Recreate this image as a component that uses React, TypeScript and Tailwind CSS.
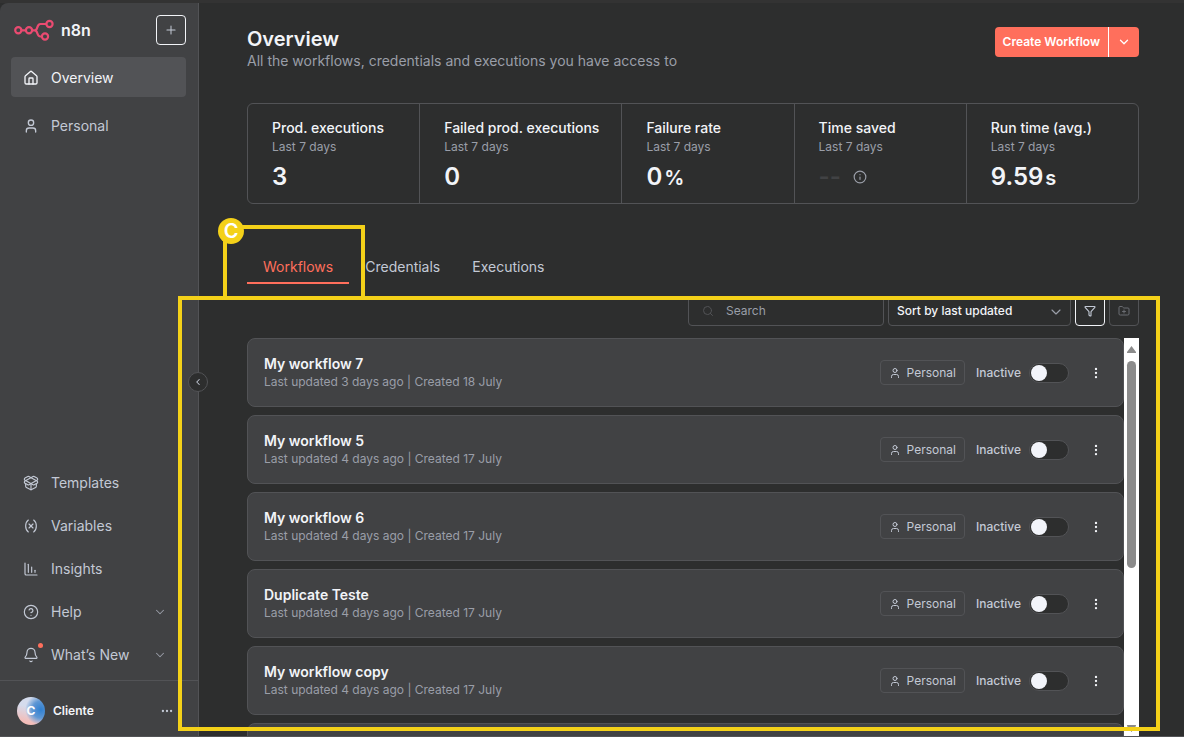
import React, { useState } from "react";
import {
  Bell,
  ChartColumnDecreasing,
  ChevronDown,
  ChevronLeft,
  CircleHelp,
  Ellipsis,
  EllipsisVertical,
  FolderPlus,
  Filter,
  House,
  Info,
  PackageOpen,
  Plus,
  Search,
  User,
  Variable,
} from "lucide-react";

interface Workflow {
  id: number;
  name: string;
  updated: string;
  created: string;
  active: boolean;
}

const initialWorkflows: Workflow[] = [
  { id: 1, name: "My workflow 7", updated: "3 days ago", created: "18 July", active: false },
  { id: 2, name: "My workflow 5", updated: "4 days ago", created: "17 July", active: false },
  { id: 3, name: "My workflow 6", updated: "4 days ago", created: "17 July", active: false },
  { id: 4, name: "Duplicate Teste", updated: "4 days ago", created: "17 July", active: false },
  { id: 5, name: "My workflow copy", updated: "4 days ago", created: "17 July", active: false },
];

const metrics = [
  { label: "Prod. executions", value: "3", unit: "" },
  { label: "Failed prod. executions", value: "0", unit: "" },
  { label: "Failure rate", value: "0", unit: "%" },
  { label: "Time saved", value: "", unit: "" },
  { label: "Run time (avg.)", value: "9.59", unit: "s" },
];

const bottomLinks = [
  { label: "Templates", icon: PackageOpen, expandable: false, dot: false },
  { label: "Variables", icon: Variable, expandable: false, dot: false },
  { label: "Insights", icon: ChartColumnDecreasing, expandable: false, dot: false },
  { label: "Help", icon: CircleHelp, expandable: true, dot: false },
  { label: "What’s New", icon: Bell, expandable: true, dot: true },
];

const tabs = ["Workflows", "Credentials", "Executions"];

function Logo() {
  return (
    <svg width="40" height="22" viewBox="0 0 40 22" fill="none" stroke="#ea4b71" strokeWidth="2.2">
      <circle cx="4.3" cy="11.3" r="3.1" />
      <circle cx="15" cy="11.3" r="3.1" />
      <circle cx="35.5" cy="5" r="3.1" />
      <circle cx="31" cy="17.5" r="3.1" />
      <path d="M7.5 11.3h4.3M18.2 11.3h2.6M20.8 11.3c3.4 0 1.6-6.3 5.6-6.3h5.8M20.8 11.3c3.4 0 1.6 6.2 5.6 6.2h1.4" />
    </svg>
  );
}

function Sidebar() {
  return (
    <aside className="relative w-[199px] shrink-0 flex flex-col bg-[#414244] border-r border-[#525356] rounded-tl-lg">
      <div className="flex items-center pt-3 pl-3.5 pr-3">
        <Logo />
        <span className="ml-[7px] text-base leading-5 font-semibold text-[#f2f4f8]">n8n</span>
        <button
          aria-label="Add"
          className="ml-auto w-[30px] h-[30px] flex items-center justify-center border border-[#f2f4f8] rounded text-[#c3c9d5]"
        >
          <Plus size={14} strokeWidth={1.75} />
        </button>
      </div>

      <nav className="mt-3 pl-[11px] pr-3 flex flex-col gap-2 text-sm">
        <a href="#overview" className="h-10 flex items-center gap-3 px-3 pt-0.5 rounded bg-[#525356] text-[#f2f4f8]">
          <House size={16} strokeWidth={2} />
          Overview
        </a>
        <a href="#personal" className="h-10 flex items-center gap-3 px-3 pt-0.5 rounded text-[#c3c9d5]">
          <User size={16} strokeWidth={2} />
          Personal
        </a>
      </nav>

      <nav className="mt-auto pb-1.5 pl-[11px] pr-3 flex flex-col gap-[3px] text-sm">
        {bottomLinks.map(({ label, icon: Icon, expandable, dot }) => (
          <a
            key={label}
            href={"#" + label.toLowerCase()}
            className="h-10 flex items-center gap-3 px-3 pt-0.5 text-[#c3c9d5]"
          >
            <span className="relative">
              <Icon size={16} strokeWidth={1.75} />
              {dot && <span className="absolute -top-1 -right-1 w-[5px] h-[5px] rounded-full bg-[#ff6f5c]" />}
            </span>
            {label}
            {expandable && <ChevronDown className="ml-auto mr-[7px] text-[#9a9ea8]" size={14} strokeWidth={1.75} />}
          </a>
        ))}
      </nav>

      <div className="h-14 flex items-center gap-2 pt-1 pl-[17px] pr-6 border-t border-[#525356]">
        <span className="w-7 h-7 flex items-center justify-center rounded-full bg-[radial-gradient(circle_at_85%_45%,#2f7fd0_0%,#5f97d4_30%,transparent_55%),linear-gradient(15deg,#f3bdb9_15%,#d5dced_60%)] text-xs font-bold text-white">
          C
        </span>
        <span className="text-xs font-semibold text-[#f2f4f8]">Cliente</span>
        <button aria-label="User menu" className="ml-auto text-[#c3c9d5]">
          <Ellipsis size={14} />
        </button>
      </div>

      <button
        aria-label="Collapse sidebar"
        className="absolute top-[369px] -right-2.5 z-10 w-5 h-5 flex items-center justify-center rounded-full border border-[#525356] bg-[#2d2e2e] text-[#c3c9d5]"
      >
        <ChevronLeft size={10} strokeWidth={2.5} />
      </button>
    </aside>
  );
}

function Metrics() {
  return (
    <ul className="mt-8 flex border border-[#525356] rounded-md">
      {metrics.map((m) => (
        <li
          key={m.label}
          className="flex-1 h-[99px] pl-6 pr-[22px] pt-3.5 whitespace-nowrap border-r border-[#525356] last:border-r-0"
        >
          <p className="text-sm leading-5 font-medium text-[#f2f4f8]">{m.label}</p>
          <p className="text-xs leading-[18px] text-[#9a9ea8]">Last 7 days</p>
          {m.value ? (
            <p className="mt-[5px] text-2xl leading-8 font-semibold text-[#f2f4f8]">
              {m.value}
              {m.unit && <span className="ml-0.5 text-xl">{m.unit}</span>}
            </p>
          ) : (
            <p className="mt-[5px] flex items-center gap-3 text-2xl leading-8 font-semibold text-[#414244]">
              <span>--</span>
              <Info className="text-[#9a9ea8]" size={14} />
            </p>
          )}
        </li>
      ))}
    </ul>
  );
}

interface WorkflowCardProps {
  workflow: Workflow;
  onToggle: (id: number) => void;
}

function WorkflowCard({ workflow, onToggle }: WorkflowCardProps) {
  return (
    <li className="h-[69px] shrink-0 flex items-center pl-4 pr-5 bg-[#414244] border border-[#525356] rounded-lg">
      <div className="flex-1">
        <h2 className="text-sm leading-[18px] font-semibold text-[#f2f4f8]">{workflow.name}</h2>
        <p className="text-xs leading-[18px] text-[#9a9ea8]">
          Last updated {workflow.updated} | Created {workflow.created}
        </p>
      </div>
      <span className="h-[25px] flex items-center gap-1.5 px-2 border border-[#525356] rounded text-xs text-[#c3c9d5]">
        <User size={12} />
        Personal
      </span>
      <label className="ml-[11px] flex items-center gap-2 text-xs font-medium text-[#c3c9d5]">
        {workflow.active ? "Active" : "Inactive"}
        <input
          type="checkbox"
          checked={workflow.active}
          onChange={() => onToggle(workflow.id)}
          className="appearance-none w-10 h-5 rounded-full border border-[#525356] bg-[#2d2e2e] before:block before:w-4 before:h-4 before:m-px before:rounded-full before:bg-[#f2f4fa] checked:before:ml-5"
        />
      </label>
      <button aria-label="Workflow actions" className="ml-5 text-[#f2f4f8]">
        <EllipsisVertical size={14} />
      </button>
    </li>
  );
}

function Scrollbar() {
  return (
    <div className="w-[15px] shrink-0 flex flex-col items-center bg-white pt-2">
      <svg width="9" height="7" viewBox="0 0 9 7" fill="#8b8b8b">
        <path d="M4.5 0 9 6a.6.6 0 0 1-.5 1h-8A.6.6 0 0 1 0 6z" />
      </svg>
      <div className="mt-2 w-[9px] h-[207px] rounded-full bg-[#8b8b8b]" />
      <svg className="mt-auto mb-1" width="9" height="7" viewBox="0 0 9 7" fill="#8b8b8b">
        <path d="M4.5 7 0 1a.6.6 0 0 1 .5-1h8A.6.6 0 0 1 9 1z" />
      </svg>
    </div>
  );
}

// Yellow callouts drawn on top of the page
function Highlights() {
  return (
    <div className="absolute inset-0 z-20 pointer-events-none">
      <div className="absolute left-[223px] top-[222px] w-[142px] h-[75px] border-4 border-[#f4d119]" />
      <div className="absolute left-[178px] top-[293px] right-6 bottom-[5px] border-4 border-[#f4d119]" />
      <span className="absolute left-[218px] top-[215px] w-[26px] h-[26px] flex items-center justify-center rounded-full bg-[#f4d119] text-xl font-semibold text-white">
        C
      </span>
    </div>
  );
}

function App() {
  const [workflows, setWorkflows] = useState(initialWorkflows);
  const [activeTab, setActiveTab] = useState("Workflows");

  const handleToggle = (id: number) => {
    setWorkflows(workflows.map((w) => (w.id === id ? { ...w, active: !w.active } : w)));
  };

  return (
    <div className="relative h-screen overflow-hidden flex bg-[#2d2e2e] border-t-3 border-b border-t-[#333333] border-b-[#525356] font-['Inter',sans-serif]">
      <Sidebar />

      <main className="flex-1 min-w-0 flex flex-col pl-12 pr-[45px] pt-6">
        <header className="flex items-start justify-between">
          <div>
            <h1 className="text-xl leading-6 font-semibold text-[#f2f4f8]">Overview</h1>
            <p className="text-sm leading-5 text-[#9a9ea8]">
              All the workflows, credentials and executions you have access to
            </p>
          </div>
          <div className="h-[30px] flex rounded overflow-hidden bg-[#ff6f5c] text-white">
            <button className="px-2 text-xs font-semibold border-r border-white">Create Workflow</button>
            <button aria-label="More create options" className="w-[30px] flex items-center justify-center">
              <ChevronDown size={14} strokeWidth={2.25} />
            </button>
          </div>
        </header>

        <Metrics />

        <div role="tablist" className="mt-12 flex text-sm leading-5">
          {tabs.map((tab) => (
            <button
              key={tab}
              role="tab"
              aria-selected={activeTab === tab}
              onClick={() => setActiveTab(tab)}
              className={`px-4 pt-[5px] pb-[5px] border-b-2 ${
                activeTab === tab ? "border-[#ff6f5c] text-[#ff6f5c]" : "border-transparent text-[#c3c9d5]"
              }`}
            >
              {tab}
            </button>
          ))}
        </div>

        <div className="mt-3 flex justify-end gap-1">
          <label className="w-[196px] h-[30px] flex items-center gap-3 px-[13px] border border-[#525356] rounded text-[#525356]">
            <Search size={12} />
            <input
              type="text"
              aria-label="Search"
              placeholder="Search"
              className="min-w-0 flex-1 bg-transparent outline-none text-xs text-[#f2f4f8] placeholder:text-[#9a9ea8]"
            />
          </label>
          <div className="relative w-[183px] h-[30px]">
            <select
              aria-label="Sort"
              className="appearance-none w-full h-full px-2 bg-transparent border border-[#525356] rounded text-xs font-medium text-[#f2f4f8]"
            >
              <option>Sort by last updated</option>
              <option>Sort by last created</option>
              <option>Sort by name (A-Z)</option>
            </select>
            <ChevronDown
              className="absolute right-[7px] top-2 pointer-events-none text-[#9a9ea8]"
              size={16}
              strokeWidth={1.75}
            />
          </div>
          <button
            aria-label="Filters"
            className="w-[30px] h-[30px] flex items-center justify-center border border-[#f2f4f8] rounded text-[#c3c9d5]"
          >
            <Filter size={12} strokeWidth={2.25} />
          </button>
          <button
            aria-label="Add folder"
            className="w-[30px] h-[30px] flex items-center justify-center border border-[#525356] rounded text-[#6b6d72]"
          >
            <FolderPlus size={12} />
          </button>
        </div>

        <div className="mt-3 flex-1 min-h-0 flex">
          <ul className="flex-1 flex flex-col gap-2 overflow-hidden">
            {workflows.map((w) => (
              <WorkflowCard key={w.id} workflow={w} onToggle={handleToggle} />
            ))}
            <li aria-hidden="true" className="h-[69px] shrink-0 bg-[#414244] border border-[#525356] rounded-lg" />
          </ul>
          <Scrollbar />
        </div>
      </main>

      <Highlights />
    </div>
  );
}

export default App;
